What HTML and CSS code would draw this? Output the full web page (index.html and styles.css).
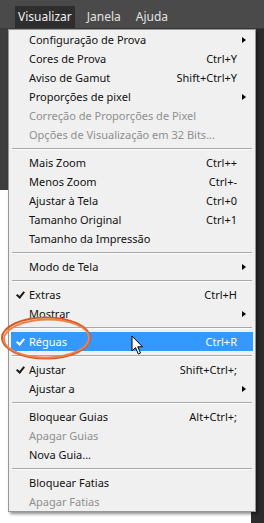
FILE: index.html
```html
<!DOCTYPE html>
<html lang="pt">

<head>
    <meta charset="UTF-8">
    <meta name="viewport" content="width=device-width, initial-scale=1.0">
    <title>Visualizar</title>
    <link rel="stylesheet" href="styles.css">
</head>

<body>

    <div class="app">
        <div class="menubar">
            <span class="menubar-item active">Visualizar</span>
            <span class="menubar-item">Janela</span>
            <span class="menubar-item">Ajuda</span>
        </div>

        <div class="workspace">
            <div class="canvas-area">
                <div class="pasteboard"></div>
                <div class="document"></div>
            </div>
            <div class="side-strip"></div>
        </div>

        <ul class="dropdown">
            <li class="item"><span class="label">Configuração de Prova</span><span class="arrow"></span></li>
            <li class="item"><span class="label">Cores de Prova</span><span class="key">Ctrl+Y</span></li>
            <li class="item"><span class="label">Aviso de Gamut</span><span class="key">Shift+Ctrl+Y</span></li>
            <li class="item"><span class="label">Proporções de pixel</span><span class="arrow"></span></li>
            <li class="item disabled"><span class="label">Correção de Proporções de Pixel</span></li>
            <li class="item disabled"><span class="label">Opções de Visualização em 32 Bits...</span></li>
            <li class="sep"></li>
            <li class="item"><span class="label">Mais Zoom</span><span class="key">Ctrl++</span></li>
            <li class="item"><span class="label">Menos Zoom</span><span class="key">Ctrl+-</span></li>
            <li class="item"><span class="label">Ajustar à Tela</span><span class="key">Ctrl+0</span></li>
            <li class="item"><span class="label">Tamanho Original</span><span class="key">Ctrl+1</span></li>
            <li class="item"><span class="label">Tamanho da Impressão</span></li>
            <li class="sep"></li>
            <li class="item"><span class="label">Modo de Tela</span><span class="arrow"></span></li>
            <li class="sep"></li>
            <li class="item checked"><span class="label">Extras</span><span class="key">Ctrl+H</span></li>
            <li class="item"><span class="label">Mostrar</span><span class="arrow"></span></li>
            <li class="sep"></li>
            <li class="item checked selected"><span class="label">Réguas</span><span class="key">Ctrl+R</span></li>
            <li class="sep"></li>
            <li class="item checked"><span class="label">Ajustar</span><span class="key">Shift+Ctrl+;</span></li>
            <li class="item"><span class="label">Ajustar a</span><span class="arrow"></span></li>
            <li class="sep"></li>
            <li class="item"><span class="label">Bloquear Guias</span><span class="key">Alt+Ctrl+;</span></li>
            <li class="item disabled"><span class="label">Apagar Guias</span></li>
            <li class="item"><span class="label">Nova Guia...</span></li>
            <li class="sep"></li>
            <li class="item"><span class="label">Bloquear Fatias</span></li>
            <li class="item disabled"><span class="label">Apagar Fatias</span></li>
        </ul>

        <!-- orange hand-drawn ring around Réguas -->
        <svg class="ring" width="94" height="48" viewBox="0 0 94 48">
            <ellipse cx="46" cy="23" rx="44" ry="20.5" fill="none" stroke="#d65a26" stroke-width="2" />
            <ellipse cx="46.5" cy="23.5" rx="42.5" ry="19" fill="none" stroke="#ec834c" stroke-width="1.8" transform="rotate(-1 46 23)" />
        </svg>

        <svg class="cursor" width="13" height="21" viewBox="0 0 13 21">
            <path d="M1 1 L1 16 L4.5 12.6 L7.3 19 L9.5 18 L6.8 11.8 L11.5 11.8 Z" fill="#fff" stroke="#000" stroke-width="1" stroke-linejoin="round" />
        </svg>
    </div>

</body>

</html>
```

FILE: styles.css
```css
body {
    margin: 0;
    padding: 0;
    background: #2b2b2b;
    font-family: 'Noto Sans', 'Liberation Sans', sans-serif;
    overflow: hidden;
}

.app {
    position: relative;
    width: 264px;
    height: 523px;
    display: flex;
    flex-direction: column;
}

/* top menu bar */
.menubar {
    height: 29px;
    display: flex;
    align-items: flex-end;
    gap: 9px;
    padding-left: 15px;
    background: #4a4a4a;
    box-sizing: border-box;
    border-bottom: 1px solid #3a3a3a;
}

.menubar-item {
    height: 22px;
    line-height: 21px;
    padding: 0 3px;
    font-size: 12px;
    color: #e2e2e2;
}

.menubar-item.active {
    background: #2e2e2e;
    color: #f0f0f0;
}

/* background behind the menu */
.workspace {
    flex: 1;
    display: flex;
}

.canvas-area {
    flex: 1;
    display: flex;
    flex-direction: column;
}

.pasteboard {
    height: 161px;
    background: #3d3d3d;
}

.document {
    flex: 1;
    background: #ffffff;
}

.side-strip {
    width: 13px;
    background: #2c2c2c;
}

/* dropdown */
.dropdown {
    position: absolute;
    top: 29px;
    left: 8px;
    width: 248px;
    margin: 0;
    padding: 0;
    list-style: none;
    box-sizing: border-box;
    background: #f0f0f0;
    border: 1px solid #979797;
    box-shadow: 2px 2px 3px rgba(0, 0, 0, 0.45);
}

.item {
    height: 19px;
    margin: 0 2px;
    display: grid;
    grid-template-columns: 18px 1fr auto 16px;
    align-items: center;
    font-size: 11px;
    color: #111;
}

.item .label {
    grid-column: 2;
    white-space: nowrap;
}

.item .key {
    grid-column: 3;
}

.item .arrow {
    grid-column: 4;
    justify-self: end;
    margin-right: 7px;
    width: 0;
    height: 0;
    border-top: 3.5px solid transparent;
    border-bottom: 3.5px solid transparent;
    border-left: 4px solid #000;
}

.item.disabled {
    color: #8f8f8f;
}

.item.checked::before {
    content: '';
    grid-column: 1;
    grid-row: 1;
    justify-self: center;
    width: 3px;
    height: 6px;
    margin: -2px 0 0 1px;
    border-right: 2px solid #1a1a1a;
    border-bottom: 2px solid #1a1a1a;
    transform: rotate(40deg);
}

.item.selected {
    background: #3399ff;
    color: #fff;
}

.item.selected::before {
    border-color: #fff;
}

.sep {
    height: 9px;
    margin: 0 3px;
    display: flex;
    align-items: center;
}

.sep::after {
    content: '';
    flex: 1;
    height: 1px;
    background: #a8a8a8;
    border-bottom: 1px solid #fcfcfc;
}

/* overlays */
.ring {
    position: absolute;
    left: 0;
    top: 315px;
}

.cursor {
    position: absolute;
    left: 131px;
    top: 335px;
}
```
